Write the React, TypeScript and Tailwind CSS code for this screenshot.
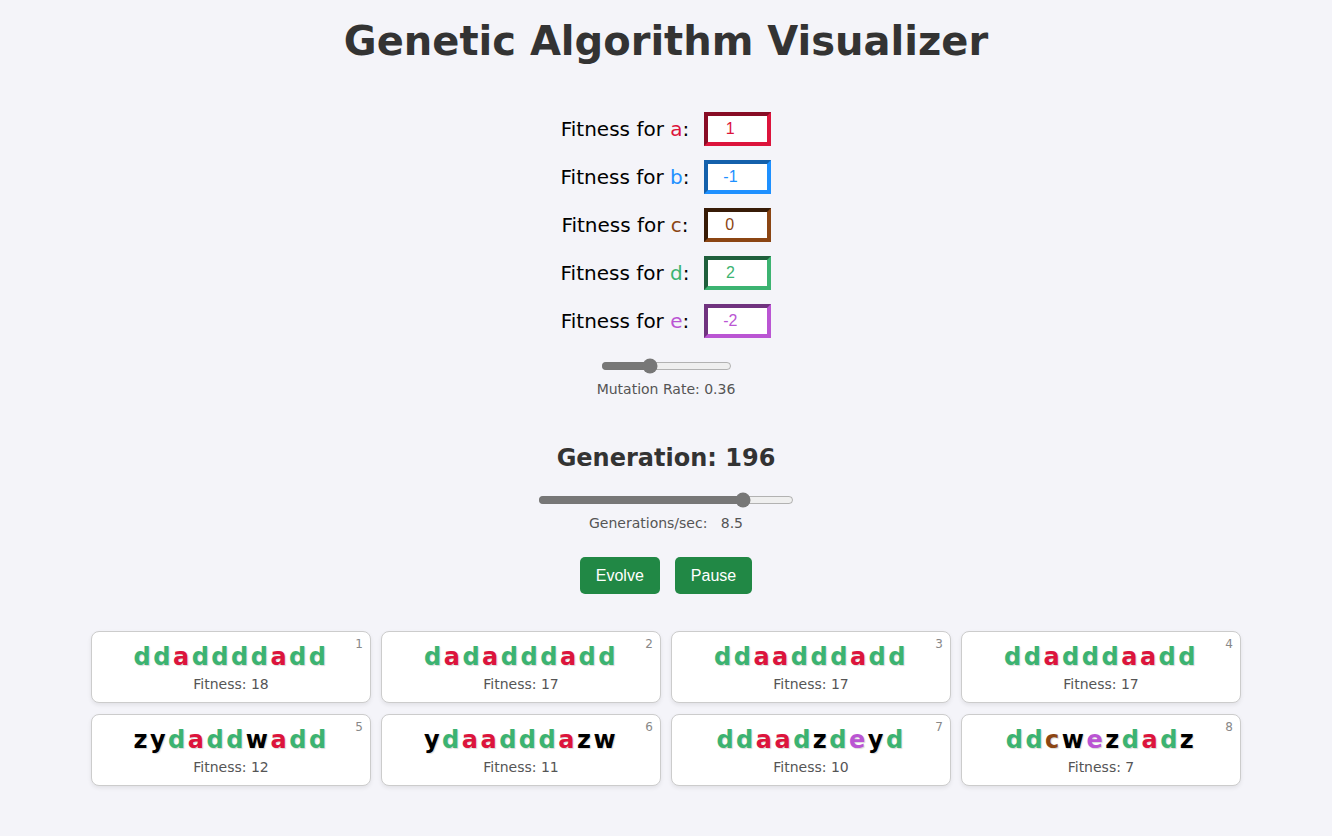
import React, { useState } from 'react';

const COLORS: Record<string, string> = {
  a: '#dc143c',
  b: '#1e90ff',
  c: '#8b4513',
  d: '#3cb371',
  e: '#ba55d3',
};

const INPUT_STYLES: Record<string, string> = {
  a: 'border-[#dc143c] text-[#dc143c]',
  b: 'border-[#1e90ff] text-[#1e90ff]',
  c: 'border-[#8b4513] text-[#8b4513]',
  d: 'border-[#3cb371] text-[#3cb371]',
  e: 'border-[#ba55d3] text-[#ba55d3]',
};

const LETTER_STYLES: Record<string, string> = {
  a: 'text-[#dc143c]',
  b: 'text-[#1e90ff]',
  c: 'text-[#8b4513]',
  d: 'text-[#3cb371]',
  e: 'text-[#ba55d3]',
};

const population = [
  { genes: 'ddaddddadd', fitness: 18 },
  { genes: 'dadadddadd', fitness: 17 },
  { genes: 'ddaadddadd', fitness: 17 },
  { genes: 'ddadddaadd', fitness: 17 },
  { genes: 'zydaddwadd', fitness: 12 },
  { genes: 'ydaadddazw', fitness: 11 },
  { genes: 'ddaadzdeyd', fitness: 10 },
  { genes: 'ddcwezdadz', fitness: 7 },
];

const App: React.FC = () => {
  const [weights, setWeights] = useState<Record<string, string>>({ a: '1', b: '-1', c: '0', d: '2', e: '-2' });
  const [mutation, setMutation] = useState(0.36);
  const [speed, setSpeed] = useState(8.5);

  return (
    <div className="min-h-screen bg-[#f4f4f9] font-['DejaVu_Sans',Verdana,sans-serif] text-[#333] pt-[18px]">
      <h1 className="text-center text-[40px] leading-[46px] font-bold">Genetic Algorithm Visualizer</h1>

      {/* fitness weights */}
      <div className="mt-[48px] flex flex-col items-center gap-[14px]">
        {Object.keys(COLORS).map((k) => (
          <div key={k} className="flex items-center gap-[15px]">
            <label className="text-[20px] text-black">
              Fitness for <span className={LETTER_STYLES[k]}>{k}</span>:
            </label>
            <input
              type="number"
              value={weights[k]}
              onChange={(e) => setWeights({ ...weights, [k]: e.target.value })}
              className={`w-[67px] h-[34px] border-4 [border-style:inset] bg-white text-center font-['Liberation_Sans',Arial,sans-serif] text-[16px] px-[2px] ${INPUT_STYLES[k]}`}
            />
          </div>
        ))}
      </div>

      <div className="mt-[20px] flex flex-col items-center">
        <input
          type="range"
          min={0}
          max={1}
          step={0.01}
          value={mutation}
          onChange={(e) => setMutation(parseFloat(e.target.value))}
          className="w-[131px] h-[16px] accent-[#777]"
        />
        <div className="mt-[7px] text-[14px] leading-[16px] text-[#555]">Mutation Rate: {mutation.toFixed(2)}</div>
      </div>

      <h2 className="mt-[47px] text-center text-[24px] leading-[28px] font-bold">Generation: 196</h2>

      <div className="mt-[20px] flex flex-col items-center">
        <input
          type="range"
          min={0.5}
          max={10.25}
          step={0.25}
          value={speed}
          onChange={(e) => setSpeed(parseFloat(e.target.value))}
          className="w-[256px] h-[16px] accent-[#777]"
        />
        <div className="mt-[7px] text-[14px] leading-[16px] text-[#555] whitespace-pre">Generations/sec:   {speed}</div>
      </div>

      <div className="mt-[26px] flex justify-center gap-[15px] font-['Liberation_Sans',Arial,sans-serif]">
        <button className="bg-[#218845] text-white text-[16px] leading-[19px] py-[9px] px-[16px] rounded-[5px]">Evolve</button>
        <button className="bg-[#218845] text-white text-[16px] leading-[19px] py-[9px] px-[16px] rounded-[5px]">Pause</button>
      </div>

      {/* population */}
      <div className="mt-[37px] mx-auto w-[1150px] grid grid-cols-4 gap-x-[10px] gap-y-[11px]">
        {population.map((p, i) => (
          <div
            key={i}
            className="relative bg-white border border-[#ccc] rounded-[8px] shadow-[0_2px_4px_rgba(0,0,0,0.08)] pt-[10px] pb-[9px] text-center"
          >
            <span className="absolute top-[5px] right-[7px] text-[12px] leading-[14px] text-[#888]">{i + 1}</span>
            <div className="text-[24px] leading-[30px] font-bold tracking-[2.5px] [text-shadow:1px_1px_1px_rgba(0,0,0,0.15)]">
              {p.genes.split('').map((g, j) => (
                <span key={j} className={LETTER_STYLES[g] ?? 'text-black'}>
                  {g}
                </span>
              ))}
            </div>
            <div className="mt-[4px] text-[14px] leading-[17px] text-[#555]">Fitness: {p.fitness}</div>
          </div>
        ))}
      </div>
    </div>
  );
};

export default App;
